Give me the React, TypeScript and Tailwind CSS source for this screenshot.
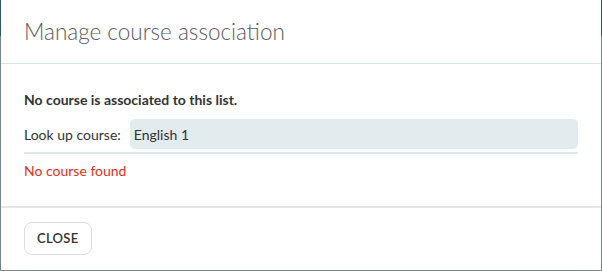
export default function App() {
  return (
    <div className="w-[602px] h-[271px] bg-[linear-gradient(to_bottom,#2d5a60_0px,#2d5a60_36px,#76878c_36px)] pl-px pr-px pb-px font-['Lato',sans-serif]">
      <div className="h-full bg-white flex flex-col">
        <div className="h-[64px] border-b border-[#d8e6ec] px-[23px] flex items-center">
          <h2 className="text-[22.5px] font-light text-[#5a5a5a]">Manage course association</h2>
        </div>
        <div className="px-[23px] pt-[26px] flex flex-col">
          <p className="text-[14px] font-bold text-[#333] leading-[20px]">No course is associated to this list.</p>
          <div className="mt-[9px] flex items-center gap-[9px] pb-[3px] border-b-2 border-[#dde8eb]">
            <label className="text-[14px] text-[#333] whitespace-nowrap">Look up course:</label>
            <div className="flex-1 h-[30px] rounded-[5px] bg-[#e2ebee] px-[4px] flex items-center text-[14px] text-[#333]">
              English 1
            </div>
          </div>
          <p className="mt-[7px] text-[14px] text-[#e3301c] leading-[20px]">No course found</p>
        </div>
        <div className="mt-auto border-t-2 border-[#e6e6e6] h-[64px] px-[23px] pt-[14px]">
          <button className="h-[33px] px-[12px] rounded-[8px] border border-[#dddddd] text-[13px] font-semibold tracking-[0.3px] text-[#333] bg-white">
            CLOSE
          </button>
        </div>
      </div>
    </div>
  );
}
